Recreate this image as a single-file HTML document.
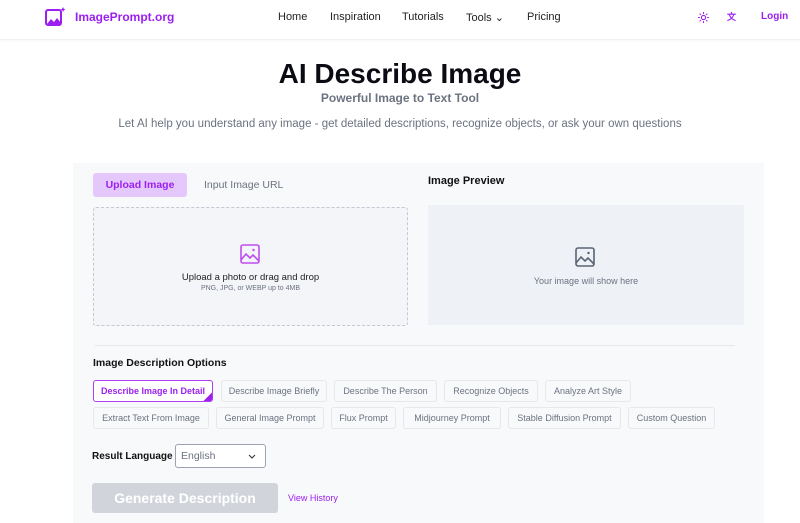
<!DOCTYPE html>
<html><head><meta charset="utf-8"><style>
*{box-sizing:border-box;margin:0;padding:0}
body{width:800px;height:521px;overflow:hidden;background:#fff;font-family:"Liberation Sans",sans-serif;position:relative;color:#111}
.a{position:absolute;white-space:nowrap}
.nav{font-size:11px;color:#222;top:11px}
.chip{position:absolute;height:22px;border:1px solid #e6e8ec;border-radius:3px;background:#f8f9fb;font-size:9px;color:#6b7280;display:flex;align-items:center;justify-content:center;white-space:nowrap}
</style></head><body>
<div class="a" style="left:0;top:0;width:800px;height:40px;border-bottom:1px solid #f0f0f0;box-shadow:0 1px 3px rgba(0,0,0,0.03)"></div>
<svg class="a" style="left:45px;top:7px" width="21" height="20" viewBox="0 0 21 20"><rect x="1" y="3" width="15" height="15" rx="2" fill="none" stroke="#9b1ff0" stroke-width="2"/><path d="M2 17l4-5 3 3 3-4 4 5v1H2z" fill="#9b1ff0"/><path d="M18 0l.8 1.7 1.7.8-1.7.8L18 5l-.8-1.7-1.7-.8 1.7-.8z" fill="#9b1ff0"/></svg>
<div class="a" style="left:75px;top:10px;font-size:12px;color:#9b1ff0;font-weight:bold">ImagePrompt.org</div>
<div class="a nav" style="left:278px">Home</div>
<div class="a nav" style="left:330px">Inspiration</div>
<div class="a nav" style="left:402px">Tutorials</div>
<div class="a nav" style="left:466px">Tools ⌄</div>
<div class="a nav" style="left:527px">Pricing</div>
<svg class="a" style="left:698px;top:12px" width="11" height="11" viewBox="0 0 12 12"><circle cx="6" cy="6" r="2.3" fill="none" stroke="#9b1ff0" stroke-width="1.2"/><path d="M6 0v2M6 10v2M0 6h2M10 6h2M1.8 1.8l1.4 1.4M8.8 8.8l1.4 1.4M1.8 10.2l1.4-1.4M8.8 3.2l1.4-1.4" stroke="#9b1ff0" stroke-width="1.1"/></svg>
<div class="a" style="left:727px;top:10px;color:#9b1ff0;font-size:9px;font-weight:bold">文</div>
<div class="a" style="left:761px;top:11px;color:#9b1ff0;font-size:10px;font-weight:bold">Login</div>
<div class="a" style="left:0;width:800px;top:58px;text-align:center;font-size:28px;font-weight:bold;color:#0b0b14">AI Describe Image</div>
<div class="a" style="left:0;width:800px;top:91px;text-align:center;font-size:12px;font-weight:bold;color:#6b7280">Powerful Image to Text Tool</div>
<div class="a" style="left:0;width:800px;top:118px;text-align:center;font-size:11.5px;color:#6b7280">Let AI help you understand any image - get detailed descriptions, recognize objects, or ask your own questions</div>
<div class="a" style="left:73px;top:163px;width:691px;height:360px;background:#f8f9fb"></div>
<div class="a" style="left:93px;top:173px;width:94px;height:24px;background:#e5c8fb;border-radius:3px;color:#9b1ff0;font-size:10.5px;font-weight:bold;display:flex;align-items:center;justify-content:center">Upload Image</div>
<div class="a" style="left:204px;top:179px;font-size:10.5px;color:#6b7280">Input Image URL</div>
<div class="a" style="left:428px;top:175px;font-size:11px;font-weight:bold;color:#111">Image Preview</div>
<div class="a" style="left:93px;top:207px;width:315px;height:119px;border:1px dashed #c4c8d0;border-radius:3px;background:#f3f5f8"></div>
<svg class="a" style="left:239px;top:243px" width="22" height="22" viewBox="0 0 22 22"><rect x="2" y="2" width="18" height="18" rx="2" fill="none" stroke="#c04cf0" stroke-width="1.6"/><circle cx="14.5" cy="7" r="1.2" fill="#c04cf0"/><path d="M2 17l5-6 4 4 3-3 6 6" fill="none" stroke="#c04cf0" stroke-width="1.6"/></svg>
<div class="a" style="left:93px;width:315px;top:272px;text-align:center;font-size:9.5px;color:#222">Upload a photo or drag and drop</div>
<div class="a" style="left:93px;width:315px;top:285px;text-align:center;font-size:7px;color:#6b7280">PNG, JPG, or WEBP up to 4MB</div>
<div class="a" style="left:428px;top:205px;width:316px;height:120px;background:#eef1f6"></div>
<svg class="a" style="left:574px;top:246px" width="22" height="22" viewBox="0 0 22 22"><rect x="2" y="2" width="18" height="18" rx="2" fill="none" stroke="#5b6475" stroke-width="1.6"/><circle cx="14.5" cy="7" r="1.2" fill="#5b6475"/><path d="M2 17l5-6 4 4 3-3 6 6" fill="none" stroke="#5b6475" stroke-width="1.6"/></svg>
<div class="a" style="left:428px;width:316px;top:276px;text-align:center;font-size:9px;color:#6b7280">Your image will show here</div>
<div class="a" style="left:95px;top:345px;width:640px;height:1px;background:#e6e8ec"></div>
<div class="a" style="left:93px;top:357px;font-size:10.5px;font-weight:bold;color:#111">Image Description Options</div>
<div class="chip" style="left:93px;top:380px;width:120px;border:1.5px solid #b040f0;background:#fff;color:#9b1ff0;font-weight:bold;overflow:hidden">Describe Image In Detail<span style="position:absolute;right:-6px;bottom:-6px;width:12px;height:12px;background:#9b1ff0;transform:rotate(45deg)"></span></div>
<div class="chip" style="left:221px;top:380px;width:106px">Describe Image Briefly</div>
<div class="chip" style="left:334px;top:380px;width:103px">Describe The Person</div>
<div class="chip" style="left:444px;top:380px;width:94px">Recognize Objects</div>
<div class="chip" style="left:545px;top:380px;width:86px">Analyze Art Style</div>
<div class="chip" style="left:93px;top:407px;width:116px">Extract Text From Image</div>
<div class="chip" style="left:216px;top:407px;width:108px">General Image Prompt</div>
<div class="chip" style="left:331px;top:407px;width:65px">Flux Prompt</div>
<div class="chip" style="left:403px;top:407px;width:98px">Midjourney Prompt</div>
<div class="chip" style="left:508px;top:407px;width:113px">Stable Diffusion Prompt</div>
<div class="chip" style="left:628px;top:407px;width:87px">Custom Question</div>
<div class="a" style="left:92px;top:451px;font-size:10px;font-weight:bold;color:#111">Result Language</div>
<div class="a" style="left:175px;top:444px;width:91px;height:24px;border:1px solid #9ca3af;border-radius:3px;background:#fff;font-size:10.5px;color:#6b7280;padding:5px 0 0 5px">English<svg style="position:absolute;right:9px;top:9px" width="8" height="5" viewBox="0 0 8 5"><path d="M1 1l3 3 3-3" fill="none" stroke="#333" stroke-width="1.1"/></svg></div>
<div class="a" style="left:92px;top:483px;width:186px;height:30px;background:#d1d5db;border-radius:3px;color:#fff;font-size:14px;font-weight:bold;display:flex;align-items:center;justify-content:center">Generate Description</div>
<div class="a" style="left:288px;top:493px;font-size:9px;color:#9b1ff0">View History</div>
</body></html>
